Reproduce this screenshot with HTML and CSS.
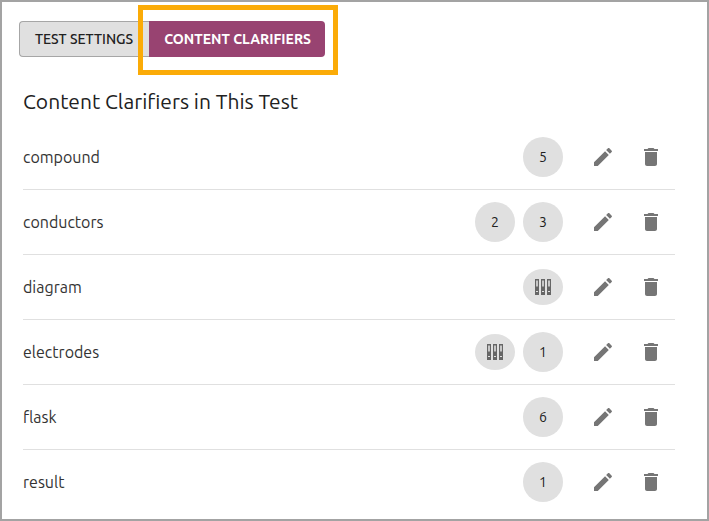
FILE: index.html
```html
<!DOCTYPE html>
<html lang="en">
<head>
  <meta charset="UTF-8">
  <title>Content Clarifiers</title>
  <meta name="viewport" content="width=device-width, initial-scale=1.0">
  <link rel="stylesheet" href="styles.css">
</head>
<body>
  <svg class="sprite" aria-hidden="true">
    <symbol id="edit" viewBox="0 0 24 24">
      <path d="M3 17.25V21h3.75L17.81 9.94l-3.75-3.75L3 17.25zM20.71 7.04c.39-.39.39-1.02 0-1.41l-2.34-2.34c-.39-.39-1.02-.39-1.41 0l-1.83 1.83 3.75 3.75 1.83-1.83z"/>
    </symbol>
    <symbol id="delete" viewBox="0 0 24 24">
      <path d="M6 19c0 1.1.9 2 2 2h8c1.1 0 2-.9 2-2V7H6v12zM19 4h-3.5l-1-1h-5l-1 1H5v2h14V4z"/>
    </symbol>
    <symbol id="binders" viewBox="0 0 16 16">
      <path fill-rule="evenodd" d="M0 0h4v16H0zM1.2 1.5v6h1.6v-6zM1 12v1h2v-1zM6 0h4v16H6zM7.2 1.5v6h1.6v-6zM7 12v1h2v-1zM12 0h4v16h-4zM13.2 1.5v6h1.6v-6zM13 12v1h2v-1z"/>
    </symbol>
  </svg>

  <main class="page">
    <div class="tabs">
      <button type="button" class="tab">TEST SETTINGS</button>
      <button type="button" class="tab active">CONTENT CLARIFIERS<span class="highlight"></span></button>
    </div>

    <h2 class="title">Content Clarifiers in This Test</h2>
    <ul class="list">
      <li class="row">
        <span class="term">compound</span>
        <div class="chips"><span class="chip">5</span></div>
        <div class="actions">
          <button type="button" class="action" aria-label="Edit compound"><svg class="icon"><use href="#edit"/></svg></button>
          <button type="button" class="action" aria-label="Delete compound"><svg class="icon"><use href="#delete"/></svg></button>
        </div>
      </li>
      <li class="row">
        <span class="term">conductors</span>
        <div class="chips"><span class="chip">2</span><span class="chip">3</span></div>
        <div class="actions">
          <button type="button" class="action" aria-label="Edit conductors"><svg class="icon"><use href="#edit"/></svg></button>
          <button type="button" class="action" aria-label="Delete conductors"><svg class="icon"><use href="#delete"/></svg></button>
        </div>
      </li>
      <li class="row">
        <span class="term">diagram</span>
        <div class="chips"><span class="chip chip-set"><svg class="binders"><use href="#binders"/></svg></span></div>
        <div class="actions">
          <button type="button" class="action" aria-label="Edit diagram"><svg class="icon"><use href="#edit"/></svg></button>
          <button type="button" class="action" aria-label="Delete diagram"><svg class="icon"><use href="#delete"/></svg></button>
        </div>
      </li>
      <li class="row">
        <span class="term">electrodes</span>
        <div class="chips"><span class="chip chip-set"><svg class="binders"><use href="#binders"/></svg></span><span class="chip">1</span></div>
        <div class="actions">
          <button type="button" class="action" aria-label="Edit electrodes"><svg class="icon"><use href="#edit"/></svg></button>
          <button type="button" class="action" aria-label="Delete electrodes"><svg class="icon"><use href="#delete"/></svg></button>
        </div>
      </li>
      <li class="row">
        <span class="term">flask</span>
        <div class="chips"><span class="chip">6</span></div>
        <div class="actions">
          <button type="button" class="action" aria-label="Edit flask"><svg class="icon"><use href="#edit"/></svg></button>
          <button type="button" class="action" aria-label="Delete flask"><svg class="icon"><use href="#delete"/></svg></button>
        </div>
      </li>
      <li class="row">
        <span class="term">result</span>
        <div class="chips"><span class="chip">1</span></div>
        <div class="actions">
          <button type="button" class="action" aria-label="Edit result"><svg class="icon"><use href="#edit"/></svg></button>
          <button type="button" class="action" aria-label="Delete result"><svg class="icon"><use href="#delete"/></svg></button>
        </div>
      </li>
    </ul>
  </main>
</body>
</html>
```
FILE: styles.css
```css
* { box-sizing: border-box; }
body { margin: 0; background: #fff; color: #212121; font-family: Ubuntu, "Noto Sans", sans-serif; font-size: 16px; }
button { font-family: inherit; cursor: pointer; }
.sprite { display: none; }
.page { min-height: 100vh; padding: 19px 32px 4px 21px; border: 2px solid #a3a3a3; }

.tabs { display: flex; margin-left: -4px; }
.tab { height: 36px; padding: 0 16px 0 15px; border: 1px solid #a6a6a6; border-right: none; border-radius: 4px 0 0 4px; background: #e0e0e0; color: #212121; font-size: 14px; font-weight: 500; white-space: nowrap; }
.tab.active { position: relative; padding: 0 14px 0 15px; border: none; border-radius: 0 4px 4px 0; background: #984371; color: #fff; font-weight: 700; }
.highlight { position: absolute; top: -16px; right: -13px; bottom: -18px; left: -11px; border: 5px solid #fbab07; pointer-events: none; }

.title { margin: 32px 0 12px; font-size: 21px; font-weight: 400; line-height: 24px; }
.list { margin: 0; padding: 0; list-style: none; }
.row { display: flex; align-items: center; height: 65px; border-bottom: 1px solid #e0e0e0; }
.row:last-child { height: 64px; border-bottom: none; }
.term { flex: 1; color: #333; }
.chips { display: flex; align-items: center; gap: 8px; margin-right: 16px; }
.chip { display: flex; align-items: center; justify-content: center; width: 40px; height: 40px; border-radius: 50%; background: #e0e0e0; font-size: 14px; }
.chip-set { height: 36px; }
.actions { display: flex; }
.action { display: flex; align-items: center; justify-content: center; width: 48px; height: 48px; padding: 0; border: none; background: none; }
.icon { width: 24px; height: 24px; fill: #757575; }
.binders { width: 16px; height: 16px; fill: #666; }
```
